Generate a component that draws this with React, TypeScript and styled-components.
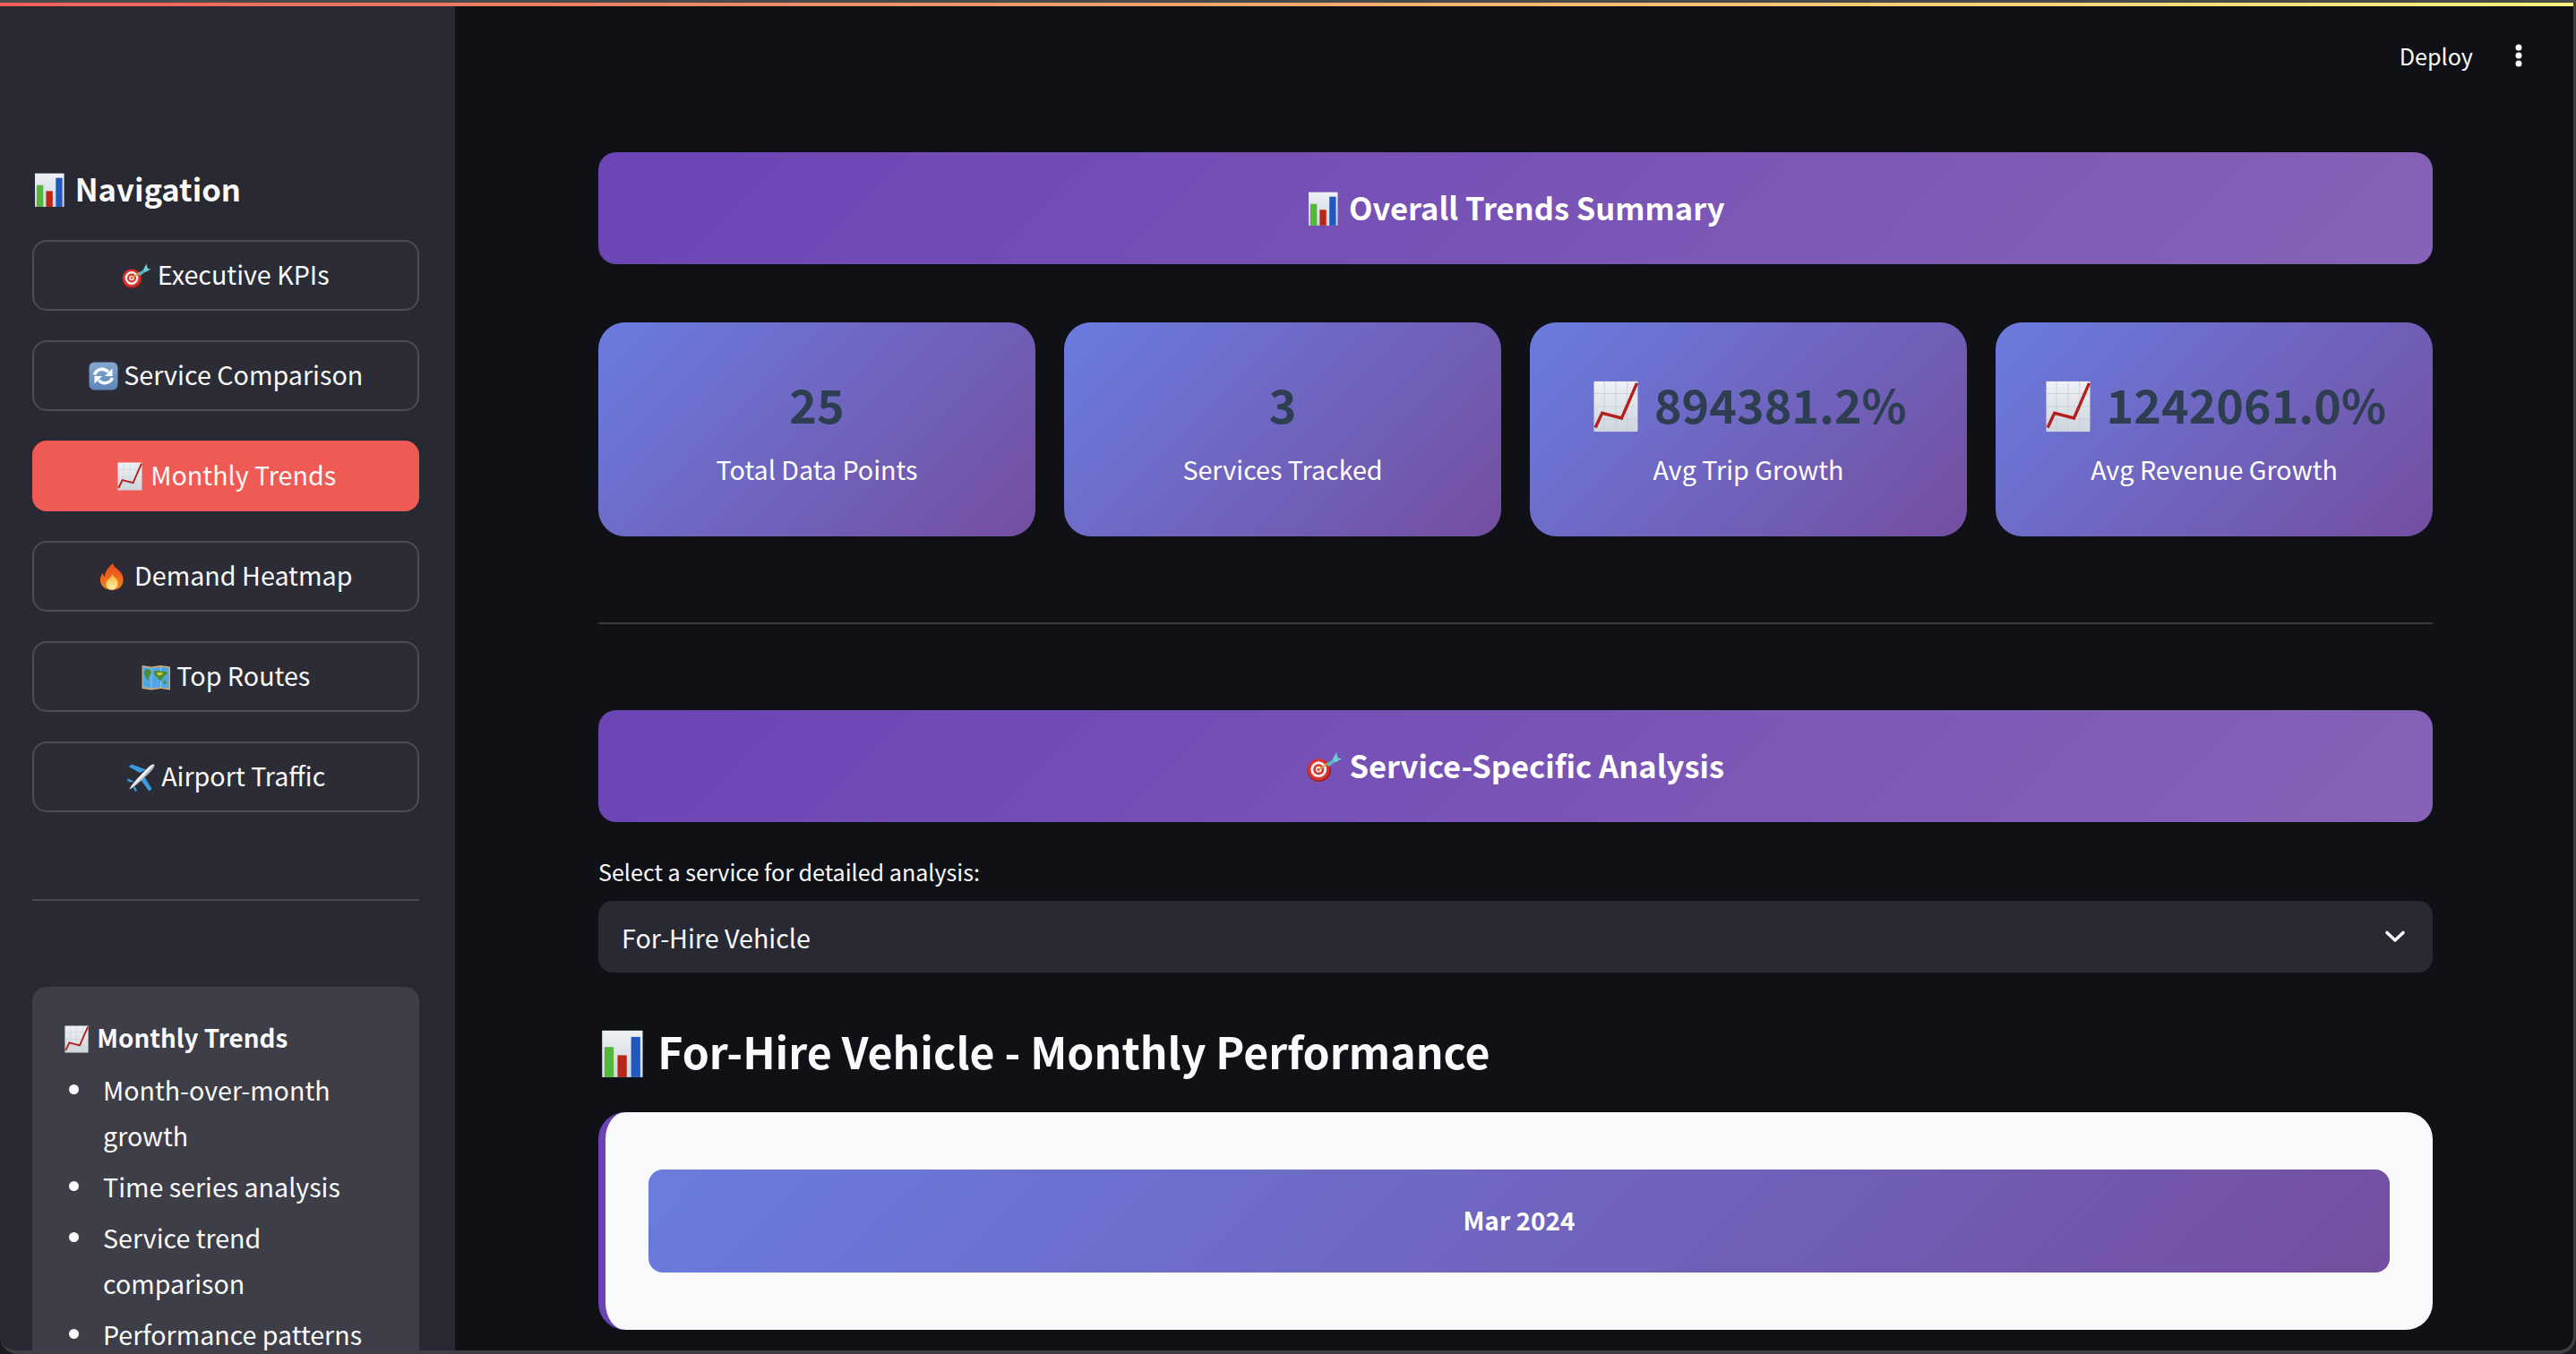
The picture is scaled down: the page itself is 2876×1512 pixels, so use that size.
import React from "react";
import styled, { createGlobalStyle } from "styled-components";

const GlobalStyle = createGlobalStyle`
  html, body { margin: 0; padding: 0; background: #1b1c1f; }
  body { font-family: "Noto Sans CJK SC", "Noto Sans", sans-serif; color: #fafafa; }
  * { box-sizing: border-box; }
`;

const Window = styled.div`
  height: 100vh;
  display: flex;
  flex-direction: column;
  overflow: hidden;
  background: #0f1116;
  border-top: 3px solid #48494b;
  border-right: 3px solid #3f4043;
  border-bottom: 4px solid #3f4043;
  border-radius: 0 0 20px 20px;
`;

const Decoration = styled.div`
  height: 4px;
  flex: none;
  background: linear-gradient(90deg, #f0605a, #fdf37f);
`;

const Body = styled.div`
  flex: 1;
  min-height: 0;
  display: flex;
`;

const Sidebar = styled.aside`
  width: 508px;
  flex: none;
  background: #282932;
  padding: 177px 40px 0 36px;
  overflow: hidden;
`;

const NavTitle = styled.h3`
  margin: 0 0 32px;
  font-size: 34.6px;
  line-height: 52px;
  font-weight: 700;
  white-space: pre;
  color: #fafafa;
`;

const NavList = styled.nav`
  display: flex;
  flex-direction: column;
  gap: 33px;
`;

const NavButton = styled.div<{ $active?: boolean }>`
  height: 79px;
  text-align: center;
  line-height: 72px;
  white-space: pre;
  font-size: 28.7px;
  color: #fafafa;
  border-radius: 16px;
  border: 2px solid ${(p) => (p.$active ? "#ef5a55" : "#4b4c56")};
  background: ${(p) => (p.$active ? "#ef5a55" : "#2b2c35")};
`;

const SideRule = styled.hr`
  margin: 97px 0 96px;
  border: 0;
  border-top: 2px solid #494a53;
`;

const InfoBox = styled.div`
  background: #3d3e48;
  border-radius: 16px;
  padding: 31px 34px 40px;
  font-size: 28.6px;
  line-height: 51px;
`;

const InfoTitle = styled.div`
  font-size: 27.8px;
  font-weight: 700;
  margin-bottom: 7px;
  white-space: pre;
`;

const InfoList = styled.ul`
  margin: 0;
  padding: 0;
  list-style: none;
  display: flex;
  flex-direction: column;
  gap: 6px;
`;

const InfoItem = styled.li`
  display: grid;
  grid-template-columns: 45px 1fr;

  &::before {
    content: "";
    width: 11px;
    height: 11px;
    margin: 20px 0 0 7px;
    border-radius: 50%;
    background: #fafafa;
  }
`;

const Main = styled.main`
  flex: 1;
  min-width: 0;
  display: flex;
  flex-direction: column;
  padding: 0 157px 0 160px;
`;

const Toolbar = styled.div`
  height: 163px;
  margin-right: -157px;
  flex: none;
  display: flex;
  align-items: flex-start;
  justify-content: flex-end;
  gap: 46px;
  padding: 36px 56px 0 0;
  font-size: 25.2px;
  line-height: 38px;
`;

const KebabIcon = styled.svg`
  width: 10px;
  height: 26px;
  margin-top: 6px;
`;

const Banner = styled.h2`
  margin: 0;
  height: 125px;
  flex: none;
  text-align: center;
  line-height: 123px;
  white-space: pre;
  font-size: 34.5px;
  font-weight: 700;
  color: #fff;
  border-radius: 20px;
  background: linear-gradient(135deg, #6b44b5, #8663b7);
`;

const KpiGrid = styled.div`
  margin-top: 65px;
  display: grid;
  grid-template-columns: repeat(4, 1fr);
  gap: 32px;
`;

const KpiCard = styled.div`
  height: 239px;
  display: flex;
  flex-direction: column;
  align-items: center;
  justify-content: center;
  border-radius: 30px;
  background: linear-gradient(135deg, #6a7cdf, #744ea0);
`;

const KpiValue = styled.div`
  white-space: pre;
  font-size: 52px;
  line-height: 76px;
  font-weight: 700;
  color: #2c3e50;
`;

const KpiLabel = styled.div`
  margin-top: 13px;
  font-size: 28.7px;
  line-height: 44px;
  color: #fff;
`;

const MainRule = styled.hr`
  margin: 96px 0;
  width: 100%;
  border: 0;
  border-top: 2px solid #3a3b42;
`;

const FieldLabel = styled.label`
  margin-top: 37px;
  font-size: 25.1px;
  line-height: 36px;
  color: #fafafa;
`;

const SelectBox = styled.div`
  margin-top: 15px;
  height: 80px;
  flex: none;
  display: flex;
  align-items: center;
  justify-content: space-between;
  padding: 0 30px 0 26px;
  border-radius: 16px;
  background: #282932;
  font-size: 28.7px;
`;

const Chevron = styled.svg`
  width: 24px;
  height: 16px;
`;

const SectionHeading = styled.h2`
  margin: 48px 0 0;
  white-space: pre;
  font-size: 48.2px;
  line-height: 78px;
  font-weight: 600;
  color: #fafafa;
`;

const MonthCard = styled.section`
  margin-top: 30px;
  height: 243px;
  flex: none;
  padding: 64px 48px 0 48px;
  border-radius: 30px;
  border-left: 8px solid #6a44b5;
  background: #f8f9fb;
`;

const MonthHeader = styled.div`
  height: 115px;
  text-align: center;
  line-height: 113px;
  border-radius: 16px;
  font-size: 28px;
  font-weight: 700;
  color: #fff;
  background: linear-gradient(135deg, #6a7cdf, #744ea0);
`;

const EmojiSvg = styled.svg`
  width: 1.15em;
  height: 1.115em;
  vertical-align: -0.2em;
`;

const Paper: React.FC<{ id: string }> = ({ id }) => (
  <>
    <defs>
      <linearGradient id={id} x1="0" y1="0" x2="0" y2="1">
        <stop offset="0" stopColor="#eef1f5" />
        <stop offset="1" stopColor="#cfd6dd" />
      </linearGradient>
    </defs>
    <rect x="2.5" y="0.5" width="27" height="31" fill={`url(#${id})`} />
  </>
);

const ChartEmoji: React.FC<{ id: string }> = ({ id }) => (
  <EmojiSvg viewBox="0 0 33 32" aria-hidden="true">
    <Paper id={id} />
    <rect x="4.1" y="11.4" width="6.1" height="20.1" fill="#53b83a" />
    <rect x="12.8" y="16.9" width="6.1" height="14.6" fill="#b92517" />
    <rect x="21.8" y="4.7" width="6.1" height="26.8" fill="#2158bf" />
  </EmojiSvg>
);

const TrendEmoji: React.FC<{ id: string }> = ({ id }) => (
  <EmojiSvg viewBox="0 0 33 32" aria-hidden="true">
    <Paper id={id} />
    <path d="M2.5 8h27M2.5 16h27M2.5 24h27M9 .5v31M16 .5v31M23 .5v31" stroke="#c3ccd5" strokeWidth=".4" />
    <path d="M3.4 29 7.600 20l12 3.200L29 1.600" fill="none" stroke="#b3201c" strokeWidth="1.900" />
  </EmojiSvg>
);

const DartEmoji: React.FC = () => (
  <EmojiSvg viewBox="0 0 33 32" aria-hidden="true">
    <ellipse cx="11.5" cy="19.5" rx="11" ry="10.5" fill="#a31f1f" />
    <circle cx="11" cy="18.5" r="10" fill="#d8342f" />
    <circle cx="11" cy="18.5" r="7.4" fill="#f7eeee" />
    <circle cx="11" cy="18.5" r="5" fill="#d8342f" />
    <circle cx="11" cy="18.5" r="2.8" fill="#f7eeee" />
    <circle cx="11" cy="18.5" r="1.3" fill="#c72b28" />
    <path d="M11 18.500 21 12" stroke="#d9a13c" strokeWidth="1.600" />
    <path d="M18 13.500 25 8.500 27 11 20.500 16Z" fill="#58b3c4" />
    <path d="M24 9 27.500 2.500 29 8 32.500 8.500 26.500 12Z" fill="#6fcbd6" />
  </EmojiSvg>
);

const RefreshEmoji: React.FC = () => (
  <EmojiSvg viewBox="0 0 33 32" aria-hidden="true">
    <defs>
      <linearGradient id="refresh-bg" x1="0" y1="0" x2="0" y2="1">
        <stop offset="0" stopColor="#86a8cf" />
        <stop offset="1" stopColor="#5d86b8" />
      </linearGradient>
    </defs>
    <rect x="0.5" y="0.5" width="32" height="31" rx="6" fill="url(#refresh-bg)" />
    <path d="M6.500 14.500C8 9.500 13 7.500 17 8.500c2 .5 3.600 1.500 4.800 3" fill="none" stroke="#fff" strokeWidth="3.400" />
    <path d="M26.500 7.500v8.500h-8.500Z" fill="#fff" />
    <path d="M26.500 18C25 22.500 20 24.500 16 23.500c-2-.5-3.600-1.500-4.800-3" fill="none" stroke="#fff" strokeWidth="3.400" />
    <path d="M6.500 24.500V16h8.500Z" fill="#fff" />
  </EmojiSvg>
);

const FireEmoji: React.FC = () => (
  <EmojiSvg viewBox="0 0 33 32" aria-hidden="true">
    <defs>
      <linearGradient id="fire-bg" x1="0" y1="0" x2="0" y2="1">
        <stop offset="0" stopColor="#e8471d" />
        <stop offset="1" stopColor="#f7841f" />
      </linearGradient>
      <linearGradient id="fire-in" x1="0" y1="0" x2="0" y2="1">
        <stop offset="0" stopColor="#fbb234" />
        <stop offset="1" stopColor="#fff3a8" />
      </linearGradient>
    </defs>
    <path d="M15 1c1 5 7 7 10 12 3 6 1.500 12-2 15-2.500 2-5.500 3-9 3-6 0-12-3.500-13-10-.5-4 1-7 3-9.500 0 2 .5 3.500 2 4.500C6 10 10 6 15 1Z" fill="url(#fire-bg)" />
    <path d="M14.500 13c.5 3 5 4.500 6 9 .8 4-2.500 8.500-6.500 8.500S7 27 7.500 23c.5-3.500 5.500-5.500 7-10Z" fill="url(#fire-in)" />
  </EmojiSvg>
);

const MapEmoji: React.FC = () => (
  <EmojiSvg viewBox="0 0 33 32" aria-hidden="true">
    <path d="M.5 3 11 4.500 21.500 3 32 4.500v26L21.500 29 11 30.500.5 29Z" fill="#caa981" />
    <path d="M2 5 11 6.300 21.500 5 30.500 6v22.500L21.500 27.200 11 28.500 2 27.200Z" fill="#4fa6e0" />
    <path d="M11 6.300v22.200M21.500 5v22.200" stroke="#8cc5ea" strokeWidth="1" />
    <path d="M4 8c3-1 6 0 7 2 0 3-2 3-2.500 6-.5 2-1.500 4-2 4-.5-3-3-5-3.500-8ZM14 10c3-2 7-1 8 0 4-1 6 0 7 2-2 2-4 2-5 5-1 1-2 3-3 4-1-3-3-3-3.500-5-2.500 0-3-3-3.500-6ZM24 21l3-1 1 3-3 1Z" fill="#4e8b2f" />
    <path d="M17 11c2-.5 5-.5 7 .5-1 3-4 3-5.500 2.500Z" fill="#d6c24a" />
  </EmojiSvg>
);

const PlaneEmoji: React.FC = () => (
  <EmojiSvg viewBox="0 0 33 32" aria-hidden="true">
    <path d="M15 11 2.500 4 6 1.500 22 7.500ZM21 16.500 28.500 29 25.500 31.500 15 17.500Z" fill="#3b9be0" />
    <path d="M4 21.500 0.500 19 2.500 17.500 9 21ZM10 27 12 31 10 32 6.500 25Z" fill="#3b9be0" />
    <path d="M3.500 29.500C5 25 15 14 24 5.500 27 2.500 30 .8 31 1.800 32 2.800 30.500 6 27.500 9 19 18 7.500 28 3.500 29.500Z" fill="#f1f3f6" />
    <path d="M3.500 29.500C7.500 28 19 18 27.500 9 30.500 6 32 2.800 31 1.800 28 6 12 23 3.500 29.500Z" fill="#a9b5c1" />
  </EmojiSvg>
);

const navItems = [
  { emoji: <DartEmoji />, label: "Executive KPIs" },
  { emoji: <RefreshEmoji />, label: "Service Comparison" },
  { emoji: <TrendEmoji id="nav-trend" />, label: "Monthly Trends", active: true },
  { emoji: <FireEmoji />, label: "Demand Heatmap" },
  { emoji: <MapEmoji />, label: "Top Routes" },
  { emoji: <PlaneEmoji />, label: "Airport Traffic" },
];

const infoItems = [
  "Month-over-month growth",
  "Time series analysis",
  "Service trend comparison",
  "Performance patterns",
];

const kpis = [
  { value: "25", label: "Total Data Points" },
  { value: "3", label: "Services Tracked" },
  { value: "894381.2%", label: "Avg Trip Growth", trend: true },
  { value: "1242061.0%", label: "Avg Revenue Growth", trend: true },
];

const App: React.FC = () => (
  <>
    <GlobalStyle />
    <Window>
      <Decoration />
      <Body>
        <Sidebar>
          <NavTitle>
            <ChartEmoji id="nav-chart" /> Navigation
          </NavTitle>
          <NavList>
            {navItems.map((item) => (
              <NavButton key={item.label} $active={item.active}>
                {item.emoji} {item.label}
              </NavButton>
            ))}
          </NavList>
          <SideRule />
          <InfoBox>
            <InfoTitle>
              <TrendEmoji id="info-trend" /> Monthly Trends
            </InfoTitle>
            <InfoList>
              {infoItems.map((item) => (
                <InfoItem key={item}>
                  <span>{item}</span>
                </InfoItem>
              ))}
            </InfoList>
          </InfoBox>
        </Sidebar>
        <Main>
          <Toolbar>
            <span>Deploy</span>
            <KebabIcon viewBox="0 0 10 26" aria-hidden="true">
              <circle cx="5" cy="4" r="3.500" fill="#fafafa" />
              <circle cx="5" cy="13" r="3.500" fill="#fafafa" />
              <circle cx="5" cy="22" r="3.500" fill="#fafafa" />
            </KebabIcon>
          </Toolbar>
          <Banner>
            <ChartEmoji id="summary-chart" /> Overall Trends Summary
          </Banner>
          <KpiGrid>
            {kpis.map((kpi, i) => (
              <KpiCard key={kpi.label}>
                <KpiValue>
                  {kpi.trend && (
                    <>
                      <TrendEmoji id={`kpi-trend-${i}`} />{" "}
                    </>
                  )}
                  {kpi.value}
                </KpiValue>
                <KpiLabel>{kpi.label}</KpiLabel>
              </KpiCard>
            ))}
          </KpiGrid>
          <MainRule />
          <Banner>
            <DartEmoji /> Service-Specific Analysis
          </Banner>
          <FieldLabel>Select a service for detailed analysis:</FieldLabel>
          <SelectBox>
            <span>For-Hire Vehicle</span>
            <Chevron viewBox="0 0 24 16" aria-hidden="true">
              <path d="M3 3.500 12 12l9-8.500" fill="none" stroke="#fafafa" strokeWidth="3.600" strokeLinecap="round" strokeLinejoin="round" />
            </Chevron>
          </SelectBox>
          <SectionHeading>
            <ChartEmoji id="section-chart" /> For-Hire Vehicle - Monthly Performance
          </SectionHeading>
          <MonthCard>
            <MonthHeader>Mar 2024</MonthHeader>
          </MonthCard>
        </Main>
      </Body>
    </Window>
  </>
);

export default App;
